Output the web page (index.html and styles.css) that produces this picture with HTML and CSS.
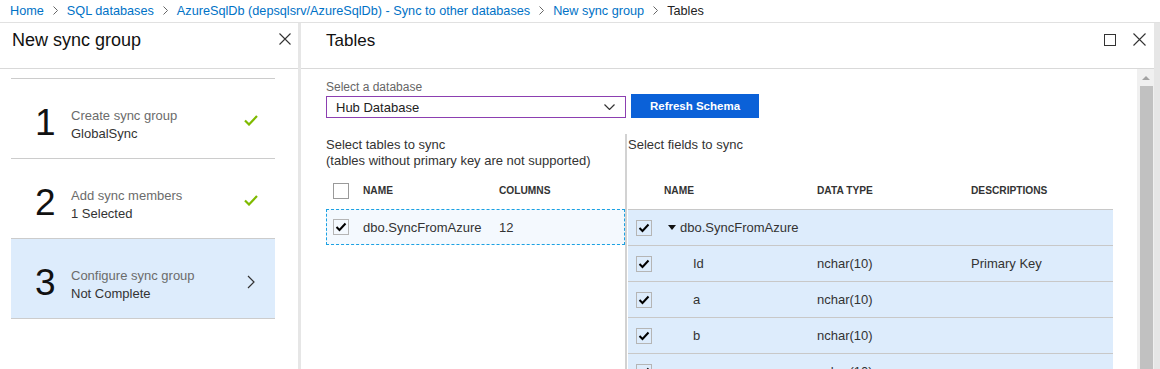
FILE: index.html
```html
<!DOCTYPE html>
<html>
<head>
<meta charset="utf-8">
<link rel="stylesheet" href="styles.css">
</head>
<body>
<div class="crumbs">
  <a>Home</a>
  <svg class="sep" width="5" height="9" viewBox="0 0 5 9"><polyline points="0.5,0.5 4.5,4.5 0.5,8.5" fill="none" stroke="#666" stroke-width="1"/></svg>
  <a>SQL databases</a>
  <svg class="sep" width="5" height="9" viewBox="0 0 5 9"><polyline points="0.5,0.5 4.5,4.5 0.5,8.5" fill="none" stroke="#666" stroke-width="1"/></svg>
  <a>AzureSqlDb (depsqlsrv/AzureSqlDb) - Sync to other databases</a>
  <svg class="sep" width="5" height="9" viewBox="0 0 5 9"><polyline points="0.5,0.5 4.5,4.5 0.5,8.5" fill="none" stroke="#666" stroke-width="1"/></svg>
  <a>New sync group</a>
  <svg class="sep" width="5" height="9" viewBox="0 0 5 9"><polyline points="0.5,0.5 4.5,4.5 0.5,8.5" fill="none" stroke="#666" stroke-width="1"/></svg>
  <span class="cur">Tables</span>
</div>
<div class="main">
  <div class="blade-left">
    <div class="lhead">
      <div class="title">New sync group</div>
      <svg class="close" width="12" height="12" viewBox="0 0 12 12"><path d="M0.5 0.5 L11.5 11.5 M11.5 0.5 L0.5 11.5" stroke="#333" stroke-width="1.1" fill="none"/></svg>
    </div>
    <div class="steps">
      <div class="step">
        <div class="num">1</div>
        <div class="txt"><div class="t1">Create sync group</div><div class="t2">GlobalSync</div></div>
        <svg class="ok" width="14" height="11" viewBox="0 0 14 11"><polyline points="1,5.5 5,9.5 13,1" fill="none" stroke="#7fba00" stroke-width="2.2"/></svg>
      </div>
      <div class="step">
        <div class="num">2</div>
        <div class="txt"><div class="t1">Add sync members</div><div class="t2">1 Selected</div></div>
        <svg class="ok" width="14" height="11" viewBox="0 0 14 11"><polyline points="1,5.5 5,9.5 13,1" fill="none" stroke="#7fba00" stroke-width="2.2"/></svg>
      </div>
      <div class="step active">
        <div class="num">3</div>
        <div class="txt"><div class="t1">Configure sync group</div><div class="t2">Not Complete</div></div>
        <svg class="chev" width="8" height="14" viewBox="0 0 8 14"><polyline points="1,1 7,7 1,13" fill="none" stroke="#333" stroke-width="1.2"/></svg>
      </div>
    </div>
  </div>
  <div class="blade-right">
    <div class="rhead">
      <div class="title small">Tables</div>
      <div class="wbtns">
        <svg width="12" height="12" viewBox="0 0 12 12"><rect x="0.5" y="0.5" width="11" height="11" fill="none" stroke="#333" stroke-width="1"/></svg>
        <svg width="13" height="13" viewBox="0 0 13 13"><path d="M0.5 0.5 L12.5 12.5 M12.5 0.5 L0.5 12.5" stroke="#333" stroke-width="1.1" fill="none"/></svg>
      </div>
    </div>
    <div class="rbody">
      <div class="content">
        <div class="label">Select a database</div>
        <div class="dbrow">
          <div class="select"><span>Hub Database</span>
            <svg width="11" height="6" viewBox="0 0 11 6"><polyline points="0.5,0.5 5.5,5.5 10.5,0.5" fill="none" stroke="#333" stroke-width="1.2"/></svg>
          </div>
          <div class="btn">Refresh Schema</div>
        </div>
        <div class="cols">
          <div class="lcol">
            <div class="intro">Select tables to sync<br>(tables without primary key are not supported)</div>
            <div class="thead lgrid">
              <div><span class="cb empty"></span></div>
              <div>NAME</div>
              <div>COLUMNS</div>
            </div>
            <div class="lrow lgrid">
              <div><span class="cb"><svg width="14" height="14" viewBox="0 0 14 14"><polyline points="2.5,7 5.5,10 11.5,3.5" fill="none" stroke="#000" stroke-width="2"/></svg></span></div>
              <div>dbo.SyncFromAzure</div>
              <div>12</div>
            </div>
          </div>
          <div class="rcol">
            <div class="intro">Select fields to sync</div>
            <div class="thead rgrid">
              <div></div>
              <div>NAME</div>
              <div>DATA TYPE</div>
              <div>DESCRIPTIONS</div>
            </div>
            <div class="frow rgrid">
              <div><span class="cb"><svg width="14" height="14" viewBox="0 0 14 14"><polyline points="2.5,7 5.5,10 11.5,3.5" fill="none" stroke="#000" stroke-width="2"/></svg></span></div>
              <div class="tname"><span class="tri"></span>dbo.SyncFromAzure</div>
              <div></div>
              <div></div>
            </div>
            <div class="frow rgrid">
              <div><span class="cb"><svg width="14" height="14" viewBox="0 0 14 14"><polyline points="2.5,7 5.5,10 11.5,3.5" fill="none" stroke="#000" stroke-width="2"/></svg></span></div>
              <div class="fname">Id</div>
              <div>nchar(10)</div>
              <div>Primary Key</div>
            </div>
            <div class="frow rgrid">
              <div><span class="cb"><svg width="14" height="14" viewBox="0 0 14 14"><polyline points="2.5,7 5.5,10 11.5,3.5" fill="none" stroke="#000" stroke-width="2"/></svg></span></div>
              <div class="fname">a</div>
              <div>nchar(10)</div>
              <div></div>
            </div>
            <div class="frow rgrid">
              <div><span class="cb"><svg width="14" height="14" viewBox="0 0 14 14"><polyline points="2.5,7 5.5,10 11.5,3.5" fill="none" stroke="#000" stroke-width="2"/></svg></span></div>
              <div class="fname">b</div>
              <div>nchar(10)</div>
              <div></div>
            </div>
            <div class="frow rgrid">
              <div><span class="cb"><svg width="14" height="14" viewBox="0 0 14 14"><polyline points="2.5,7 5.5,10 11.5,3.5" fill="none" stroke="#000" stroke-width="2"/></svg></span></div>
              <div class="fname">c</div>
              <div>nchar(10)</div>
              <div></div>
            </div>
          </div>
        </div>
      </div>
      <div class="scroll">
        <div class="arrow"><span class="up"></span></div>
        <div class="thumb"></div>
      </div>
    </div>
  </div>
  <div class="edge"></div>
</div>
</body>
</html>
```

FILE: styles.css
```css
* { box-sizing: border-box; }
html, body { margin: 0; padding: 0; }
body {
  width: 1160px;
  height: 369px;
  overflow: hidden;
  background: #fff;
  color: #222;
  font-family: "Liberation Sans", Arial, sans-serif;
}

.crumbs {
  height: 23px;
  border-bottom: 1px solid #e1e1e1;
  display: flex;
  align-items: center;
  gap: 9px;
  padding-left: 10px;
  padding-bottom: 1px;
  font-size: 12.7px;
  white-space: nowrap;
}
.crumbs a { color: #0072c6; text-decoration: none; }
.crumbs .cur { color: #222; }
.crumbs .sep { flex: none; }

.main { display: flex; height: 346px; }

.blade-left {
  width: 301px;
  flex: none;
  border-right: 3px solid #e6e6e6;
}
.lhead {
  height: 46px;
  border-bottom: 1px solid #d9d9d9;
  display: flex;
  justify-content: space-between;
  align-items: flex-start;
  padding: 5px 7px 0 12px;
}
.title { font-size: 18px; line-height: 24px; color: #111; }
.title.small { font-size: 17px; }
.close { margin-top: 5px; }

.steps {
  margin: 9px 23px 0 11px;
  border-top: 1px solid #cccccc;
}
.step {
  height: 80px;
  border-bottom: 1px solid #cccccc;
  display: flex;
  align-items: center;
  padding: 12px 17px 0 24px;
}
.step.active { background: #ddecfc; }
.num { width: 36px; font-size: 37px; line-height: 40px; color: #111; margin-top: -3px; }
.txt { flex: 1; font-size: 13px; line-height: 18px; }
.t1 { color: #6b6b6b; }
.t2 { color: #333; }
.ok { margin-top: -8px; }
.chev { margin-top: -6px; margin-right: 3px; }

.blade-right {
  flex: 1;
  min-width: 0;
  display: flex;
  flex-direction: column;
}
.edge { width: 6px; flex: none; background: #e6e6e6; }

.rhead {
  height: 46px;
  flex: none;
  border-bottom: 1px solid #d9d9d9;
  display: flex;
  align-items: flex-start;
  padding: 6px 8px 0 25px;
}
.wbtns {
  margin-left: auto;
  display: flex;
  align-items: center;
  gap: 17px;
  margin-top: 4px;
}

.rbody { flex: 1; display: flex; min-height: 0; }
.content { flex: 1; min-width: 0; padding: 11px 24px 0 25px; overflow: hidden; }

.scroll {
  width: 17px;
  flex: none;
  background: #f0f0f0;
  display: flex;
  flex-direction: column;
}
.arrow { height: 17px; display: flex; align-items: center; justify-content: center; }
.up {
  width: 0; height: 0;
  border-left: 4px solid transparent;
  border-right: 4px solid transparent;
  border-bottom: 4px solid #a3a3a3;
}
.thumb { flex: 1; background: #c1c1c1; margin: 0 1px 0 3px; }

.label { font-size: 12px; line-height: 14px; color: #666; }
.dbrow { display: flex; align-items: flex-end; gap: 5px; }
.select {
  width: 300px;
  height: 22px;
  border: 1px solid #8c3fb1;
  display: flex;
  align-items: center;
  justify-content: space-between;
  padding: 0 10px 0 9px;
  font-size: 13px;
  color: #222;
}
.btn {
  width: 128px;
  height: 24px;
  background: #0b61d8;
  color: #fff;
  font-weight: bold;
  font-size: 11.5px;
  display: flex;
  align-items: center;
  justify-content: center;
}

.cols { display: flex; margin-top: 16px; }
.lcol { width: 299px; flex: none; }
.rcol { flex: 1; border-left: 2px solid #d2d2d2; padding-left: 1px; }
.intro { height: 38px; padding-top: 3px; font-size: 13px; line-height: 16px; color: #333; }

.thead {
  height: 37px;
  align-items: center;
  font-size: 10.2px;
  font-weight: bold;
  color: #333;
}
.lgrid { display: grid; grid-template-columns: 37px 136px 1fr; align-items: center; }
.rgrid { display: grid; grid-template-columns: 36px 153px 154px 1fr; align-items: center; }
.lgrid .cb { margin-left: 7px; }
.rgrid .cb { margin-left: 8px; }

.lrow {
  height: 36px;
  border: 1px dashed #1ba1e2;
  background: #f4f9fe;
  grid-template-columns: 36px 136px 1fr;
  font-size: 13px;
  color: #333;
}
.lrow .cb { margin-left: 6px; }

.cb {
  width: 16px;
  height: 16px;
  border: 1px solid #b5b5b5;
  display: flex;
  align-items: center;
  justify-content: center;
}
.cb.empty { border-color: #9a9a9a; background: #fff; }

.frow {
  height: 36px;
  border-top: 1px solid #c8c8c8;
  background: #ddecfc;
  font-size: 13px;
  color: #333;
}
.tname { display: flex; align-items: center; padding-left: 4px; }
.tri {
  width: 0; height: 0;
  border-left: 4px solid transparent;
  border-right: 4px solid transparent;
  border-top: 5px solid #111;
  margin-right: 4px;
}
.fname { padding-left: 29px; }
```
